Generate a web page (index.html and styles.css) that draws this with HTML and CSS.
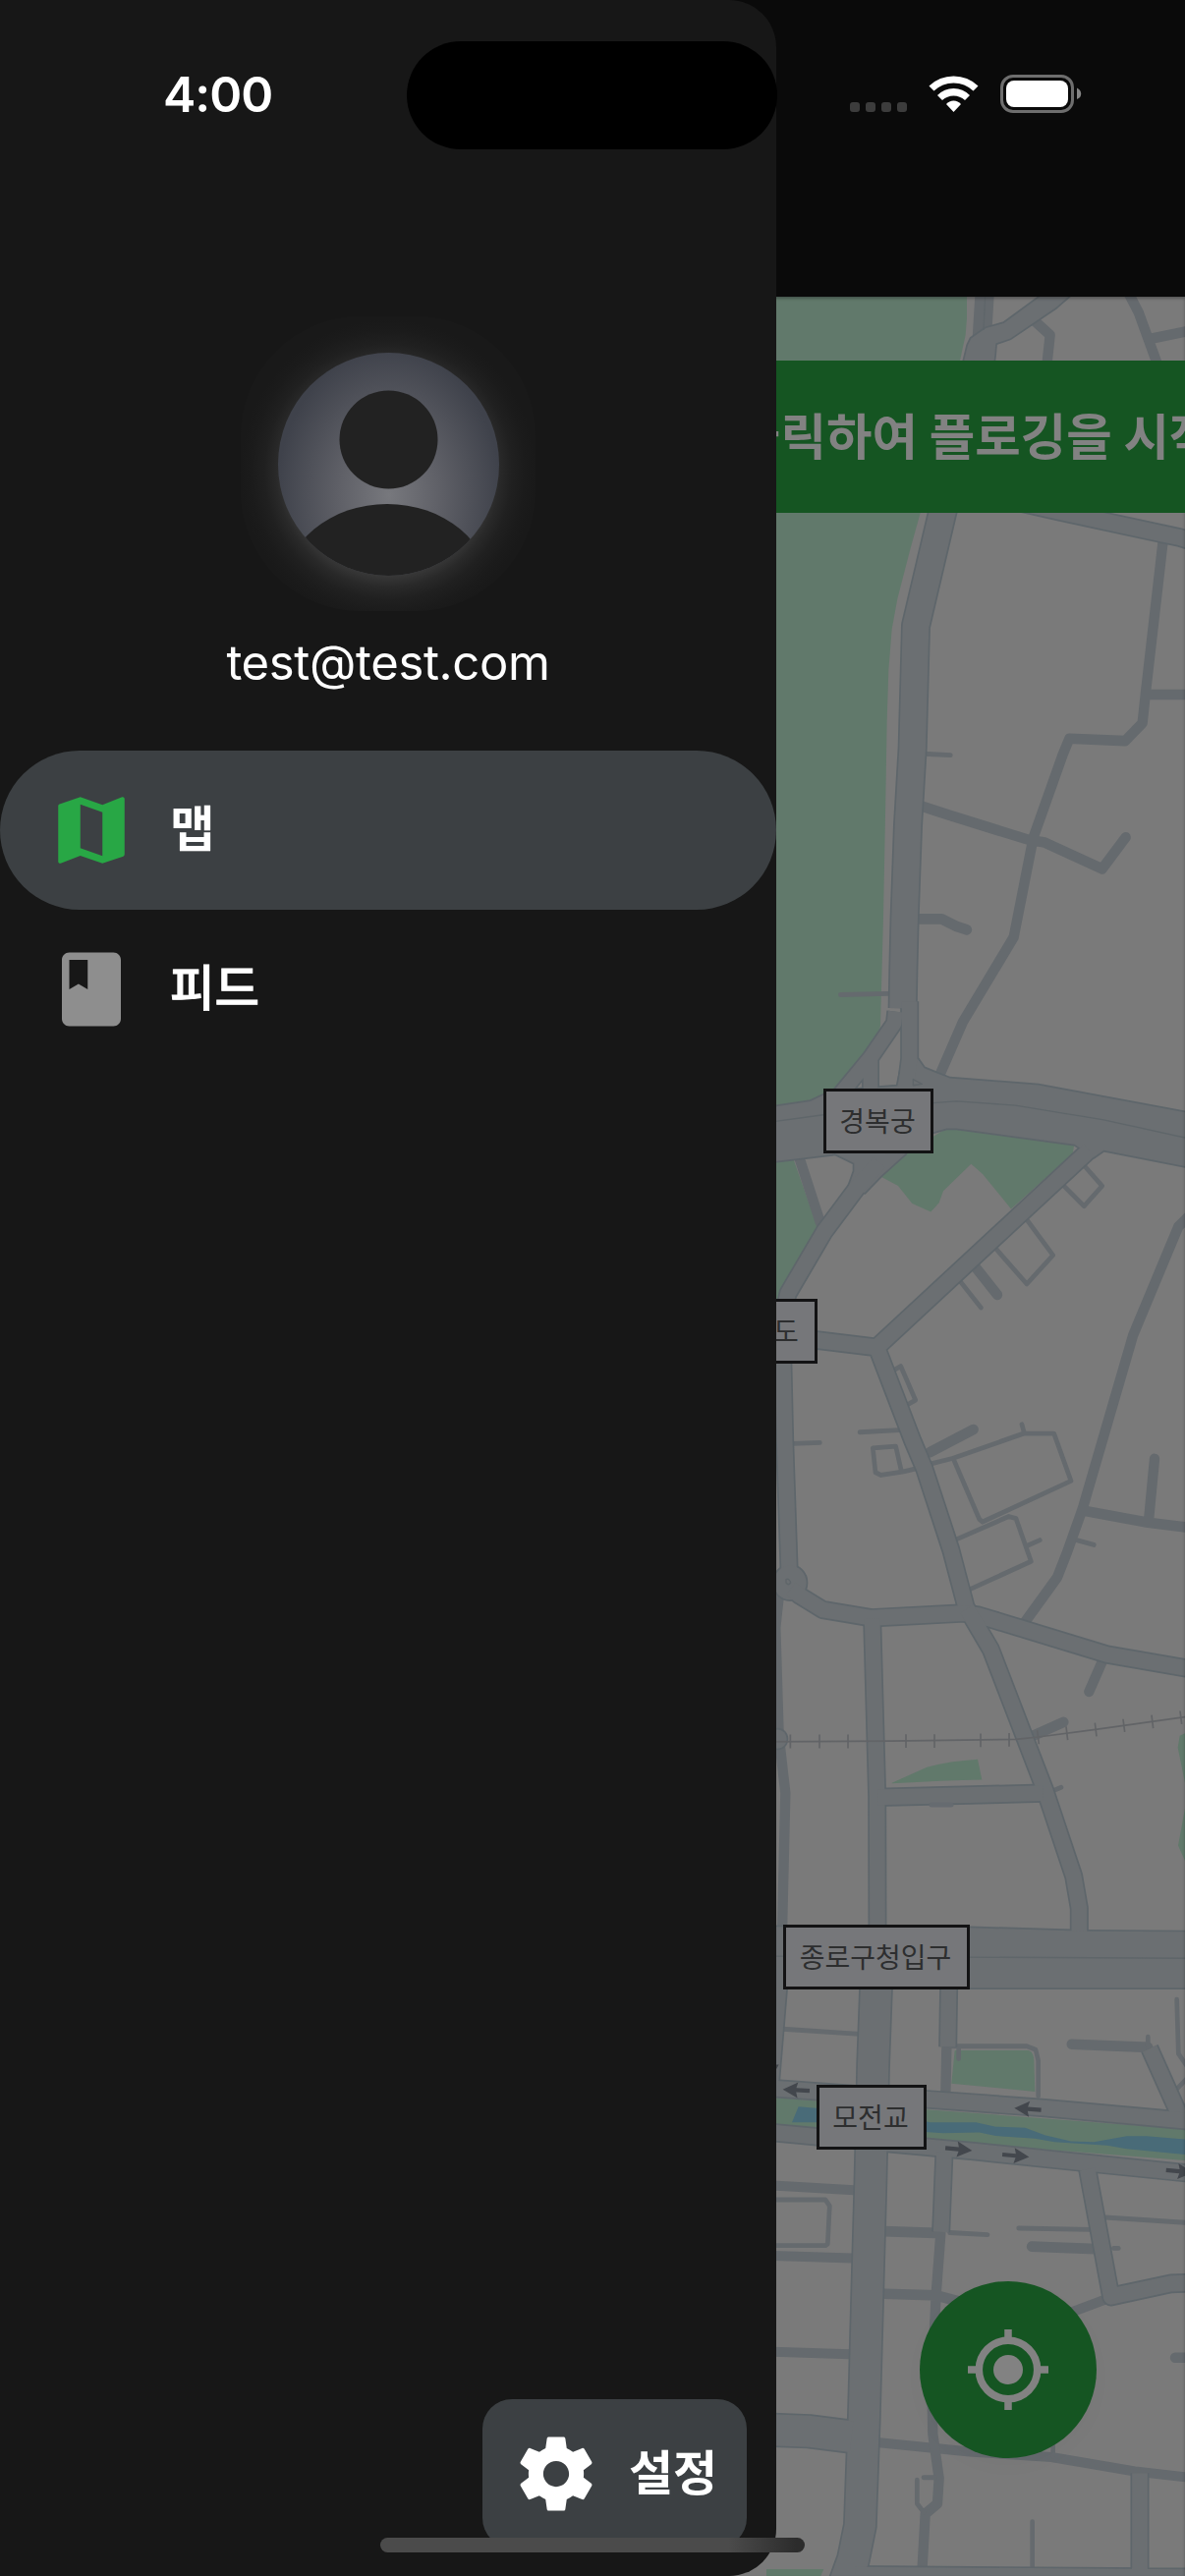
FILE: index.html
```
<!DOCTYPE html>
<html lang="ko">
<head>
<meta charset="utf-8">
<title>플로깅</title>
<link rel="stylesheet" href="styles.css">
</head>
<body>
<div class="screen">
  <main class="app">
    <header class="app-header"></header>
    <section class="map">
      <svg class="map-canvas" viewBox="0 302 1206 2320" preserveAspectRatio="none">
        <defs>
          <g id="roads">
            <g transform="translate(780 0) scale(.33333 .34439)">
              <path class="poly" d="M845 870L725 955L670 970L625 1000L615 1020L595 1100H690L697 1050L700 1015L745 1000L885 908L930 870Z"/>
            </g>
            <g transform="translate(780 520) scale(.33333 .34439)">
              <path class="w84" d="M652 -440L537 6L456 340L446 700L432 930L422 1200L418 1360L416 1470"/>
              <path class="w50" d="M700 -40L900 3L1200 66L1260 78L1300 90"/>
            </g>
            <g transform="translate(780 1040) scale(.33333 .34439)">
              <path class="poly" d="M0 255L135 235L200 205L400 190L415 120L462 110L482 137L515 150L560 167L830 187L1290 270V429L1030 380L1000 400L940 362L580 315H550L460 340L200 392L0 415Z"/>
              <path class="poly" d="M205 388L268 418V442L250 490L300 505L350 455L425 390Z"/>
              <path class="w46" d="M394 -30L390 5L318 106L225 215M318 115V210"/>
              <path class="w50" d="M437 -60V110L424 210"/>
              <path class="w50" d="M345 415L285 480L177 620L66 803L55 850M60 930L332 962L345 955L985 380M340 970L447 1240L482 1320L563 1560L612 1740M48 900L56 1240L70 1640"/>
            </g>
            <g transform="translate(780 1560) scale(.33333 .34439)">
              <circle cx="72" cy="148" r="50"/>
              <path class="w48" d="M75 165L100 185L172 228L320 252L605 238L650 245L1040 360L1290 402"/>
              <path class="w50" d="M612 225L685 345L850 760L938 1015L955 1110V1200M323 255L338 780L339 1170M557 1340L554 1520M38 1340L12 1640"/>
              <path class="w48" d="M340 782L845 770"/>
              <path class="poly" d="M0 1165L620 1168L980 1178L1290 1180V1345H0Z"/>
              <path class="w50" d="M1170 1525L1265 1730"/>
              <circle cx="34" cy="610" r="28"/>
            </g>
            <g transform="translate(780 2080) scale(.33333 .34566)">
              <path class="w98" d="M336 -200L326 60L318 400L311 640L298 1100L286 1420L265 1520L235 1600"/>
              <path class="w48" d="M20 132L500 165L850 190L1290 228M20 262L370 294L640 318L960 350L1290 382"/>
              <path class="w50" d="M543 320L533 555M980 370L1052 745L1235 707L1290 705M1140 1265V1560M270 1565L1290 1572"/>
              <path class="w92" d="M20 1138L130 1142L260 1158"/>
            </g>
          </g>
          <path id="arrow" d="M0 0L46 -23L41 -6H82V6H41L46 23Z"/>
        </defs>

        <rect class="land" x="0" y="302" width="1206" height="2320"/>

        <g class="park">
          <path transform="translate(780 0) scale(.33333 .34439)" d="M0 870H612V940L608 990L590 1070L470 1516L440 1620L400 1770L383 1860L373 1980L368 2130L364 2360L357 2710L348 3030L340 3080L210 3215L135 3255L0 3270Z"/>
          <g transform="translate(780 1040) scale(.33333 .34439)">
            <path d="M0 412L83 408L155 605L45 795L30 850H0Z"/>
            <path d="M550 315L940 362L935 390L747 553L660 450L625 420L540 500L527 535L502 562L445 537L402 485L350 458L425 390Z"/>
          </g>
          <g transform="translate(780 1560) scale(.33333 .34439)">
            <path d="M383 740L490 693Q560 675 645 670L658 730Q540 732 383 741Z"/>
            <path d="M1290 588L1262 600L1256 635L1278 740H1290ZM1290 790L1278 815L1257 925L1278 970H1290Z"/>
            <path d="M575 1530H800Q817 1535 817 1560L820 1652L565 1628Z"/>
          </g>
          <g transform="translate(780 2080) scale(.33333 .34566)">
            <path d="M0 158L500 195L1290 253V345L490 284L0 238Z"/>
            <path d="M0 1548H175L165 1570H0Z"/>
          </g>
        </g>
        <path class="water" transform="translate(780 2080) scale(.33333 .34566)" d="M78 232L98 186L150 190L400 210L500 232H640L700 245L790 248L850 270L930 288L1000 290L1100 273H1160L1290 283V328L1100 310L1040 300L880 290L820 280L700 272L650 262L540 264L400 255L155 232Z"/>

        <g class="lane">
          <g transform="translate(780 0) scale(.33333 .34439)">
            <path class="w58" d="M668 840L658 1000"/>
            <path class="w30" d="M815 945L866 990L855 1090M1105 865L1137 925L1165 1000L1195 1080M1170 1002L1290 978"/>
          </g>
          <g transform="translate(780 520) scale(.33333 .34439)">
            <path class="w30" d="M465 870L560 900L800 972L850 980L1025 1058L1097 965M465 1206H535L580 1228L612 1238M1212 80L1157 545L1148 627L1095 680L925 673L905 720L815 965L755 1260L600 1510L528 1670M1165 543H1290"/>
            <path class="w12" d="M480 718L562 722M226 1430L372 1427"/>
          </g>
          <g transform="translate(780 1040) scale(.33333 .34439)">
            <path class="w30" d="M98 395L165 595M638 725L705 807M500 1272L632 1205M1290 575L1258 605L1120 925L965 1440L918 1568L888 1642L785 1780M970 1445L1165 1480L1290 1495M1185 1292L1167 1475"/>
            <path class="w12" d="M970 425L1025 485L970 545L908 485M795 585L875 690L795 775L700 670M590 765L655 845M392 1028L410 1018L455 1118L430 1132M285 1213L405 1207M80 1247L163 1244M500 1307L570 1290L785 1217H878L930 1357L660 1478L650 1470L570 1290M780 1190L787 1215M575 1532L740 1462L762 1468L808 1595L620 1678M800 1547L835 1532M460 1320L415 1330L350 1340L333 1332L325 1260L395 1255L412 1328M950 1533L1000 1546"/>
          </g>
          <g transform="translate(780 1560) scale(.33333 .34439)">
            <path class="w30" d="M38 190L28 280L38 600L58 770L48 1180M985 470L1028 375M815 600L907 560M932 1512L1165 1521M550 1525L547 1660"/>
            <path class="w12" d="M875 763L900 753M50 1467L285 1482M560 1518H795L822 1528L830 1560V1665M587 1520V1555M1253 1380L1258 1540L1290 1585M1165 1490V1520"/>
          </g>
          <g transform="translate(780 2080) scale(.33333 .34566)">
            <path class="w28" d="M20 418L268 432M20 625L262 632M20 908L255 915M345 1175L620 1202L870 1218L1125 1260L1290 1278M935 790L1045 750"/>
            <path class="w30" d="M360 553L515 558M532 560L518 740L505 1000L508 1150L527 1280L522 1355L485 1385L475 1560M360 737L520 742L590 760M810 598L1005 605M1248 925H1290"/>
            <path class="w12" d="M20 460H180L193 478L187 590L180 595H20M560 557L675 563M460 1285V1355L480 1380M480 1278H515M812 1408V1550M770 544L990 548M1060 603H1075M1035 512L1290 528M1255 132L1285 102M875 1180V1215"/>
          </g>
        </g>

        <use href="#roads" class="road-edge"/>
        <use href="#roads" class="road-fill"/>
        <path class="road-bump" d="M948 1837H968"/>

        <g class="centerline">
          <path transform="translate(780 1040) scale(.33333 .34439)" d="M0 298L174 275L510 240L580 235L760 247L1030 290L1290 345M448 170L475 184L448 188Z"/>
          <path transform="translate(780 1560) scale(.33333 .34439)" d="M0 1252L1290 1258M60 138Q70 134 74 148Q68 158 60 148Z"/>
          <path transform="translate(780 0) scale(.33333 .34439)" d="M668 878L663 975"/>
        </g>
        <g class="rail" transform="translate(780 1560) scale(.33333 .34439)">
          <path d="M0 618L380 616L760 611L830 604L1005 582L1290 543"/>
          <path d="M73 597V637M162 597V637M249 597V637M426 596V636M513 596V636M654 594V634M741 592V632M827 585L832 625M915 573L920 613M1003 562L1008 602M1089 551L1094 589M1176 539L1181 578M1263 527L1268 566"/>
        </g>
        <g class="oneway" transform="translate(780 2080) scale(.33333 .34566)">
          <use href="#arrow" transform="translate(50 135) rotate(3)"/>
          <use href="#arrow" transform="translate(757 190) rotate(4)"/>
          <use href="#arrow" transform="translate(628 315) rotate(185)"/>
          <use href="#arrow" transform="translate(802 334) rotate(185)"/>
          <use href="#arrow" transform="translate(1302 380) rotate(185)"/>
          <path d="M24 62H38L30 76Z"/>
        </g>
      </svg>
      <div class="banner"><p class="banner-text">클릭하여 플로깅을 시작하세요</p></div>
      <span class="pin pin-palace">경복궁</span>
      <span class="pin pin-road">도</span>
      <span class="pin pin-office">종로구청입구</span>
      <span class="pin pin-bridge">모전교</span>
      <button class="locate" aria-label="내 위치">
        <svg viewBox="0 0 82 82" width="82" height="82">
          <circle class="ring" cx="41" cy="41" r="29.7"/>
          <circle class="dot" cx="41" cy="41" r="15"/>
          <path class="tick" d="M41 0V9M41 73V82M0 41H9M73 41H82"/>
        </svg>
      </button>
    </section>
  </main>

  <aside class="drawer">
    <div class="profile">
      <div class="avatar-glow">
        <svg class="avatar" viewBox="0 0 225 227">
          <defs>
            <radialGradient id="disc" gradientUnits="userSpaceOnUse" cx="113" cy="145" r="150" gradientTransform="translate(113 0) scale(.76 1) translate(-113 0)">
              <stop offset="0" stop-color="#77787d"/>
              <stop offset=".45" stop-color="#5f6067"/>
              <stop offset="1" stop-color="#3f424b"/>
            </radialGradient>
            <clipPath id="disc-clip"><ellipse cx="112.5" cy="113.5" rx="112.5" ry="113.5"/></clipPath>
          </defs>
          <g clip-path="url(#disc-clip)">
            <rect width="225" height="227" fill="url(#disc)"/>
            <ellipse cx="111" cy="241" rx="105" ry="87" fill="#222"/>
          </g>
          <circle cx="112.5" cy="88.5" r="50" fill="#222"/>
        </svg>
      </div>
      <p class="email">test@test.com</p>
    </div>
    <nav class="menu">
      <a class="menu-item menu-item-active">
        <svg class="icon icon-green" viewBox="0 0 24 24"><path d="M20.5 3l-.16.03L15 5.1 9 3 3.36 4.9c-.21.07-.36.25-.36.48V20.5c0 .28.22.5.5.5l.16-.03L9 18.9l6 2.1 5.64-1.9c.21-.07.36-.25.36-.48V3.5c0-.28-.22-.5-.5-.5zM15 19l-6-2.11V5l6 2.11V19z"/></svg>
        <span>맵</span>
      </a>
      <a class="menu-item">
        <svg class="icon icon-gray" viewBox="0 0 24 24"><path d="M18 2H6c-1.1 0-2 .9-2 2v16c0 1.1.9 2 2 2h12c1.1 0 2-.9 2-2V4c0-1.1-.9-2-2-2zM6 4h5v8l-2.5-1.5L6 12V4z"/></svg>
        <span>피드</span>
      </a>
    </nav>
    <button class="settings">
      <svg class="icon icon-white" viewBox="0 0 24 24"><path d="M19.43 12.98c.04-.32.07-.64.07-.98s-.03-.66-.07-.98l2.11-1.65c.19-.15.24-.42.12-.64l-2-3.46c-.12-.22-.39-.3-.61-.22l-2.49 1c-.52-.4-1.08-.73-1.69-.98l-.38-2.65C14.46 2.18 14.25 2 14 2h-4c-.25 0-.46.18-.49.42l-.38 2.65c-.61.25-1.17.59-1.69.98l-2.49-1c-.23-.09-.49 0-.61.22l-2 3.46c-.13.22-.07.49.12.64l2.11 1.65c-.04.32-.07.65-.07.98s.03.66.07.98l-2.11 1.65c-.19.15-.24.42-.12.64l2 3.46c.12.22.39.3.61.22l2.49-1c.52.4 1.08.73 1.69.98l.38 2.65c.03.24.24.42.49.42h4c.25 0 .46-.18.49-.42l.38-2.65c.61-.25 1.17-.59 1.69-.98l2.49 1c.23.09.49 0 .61-.22l2-3.46c.12-.22.07-.49-.12-.64l-2.11-1.65zM12 15.5c-1.93 0-3.5-1.57-3.5-3.5s1.57-3.5 3.5-3.5 3.5 1.57 3.5 3.5-1.57 3.5-3.5 3.5z"/></svg>
      <span>설정</span>
    </button>
  </aside>

  <div class="status-bar">
    <span class="clock">4:00</span>
    <span class="island"></span>
    <div class="indicators">
      <span class="signal"><i></i><i></i><i></i><i></i></span>
      <svg class="wifi" viewBox="0 0 51 38" width="51" height="38">
        <path d="M0.5 10.5Q11 0.5 25.5 0.5T50.5 10.5L45.5 15.6Q37 7.5 25.5 7.5T5.5 15.6Z"/>
        <path d="M9 20Q16 13 25.5 13T42 20L37 25Q32 20.500 25.5 20.500T14 25Z"/>
        <path d="M18 29Q21 25.5 25.5 25.5T33 29L25.5 37Z"/>
      </svg>
      <svg class="battery" viewBox="0 0 83 39" width="83" height="39">
        <rect class="shell" x="1.5" y="1.5" width="72" height="36" rx="11.5"/>
        <rect class="charge" x="6" y="6" width="63" height="27" rx="8"/>
        <path class="nub" d="M78 13.5Q82.2 15.5 82.2 19.5T78 25Z"/>
      </svg>
    </div>
  </div>
  <div class="home-indicator"></div>
</div>
</body>
</html>
```
FILE: styles.css
```
* {
  box-sizing: border-box;
}

body {
  margin: 0;
  background: #0a0a0a;
  font-family: Inter, "Noto Sans CJK KR", sans-serif;
  color: #fff;
}

p {
  margin: 0;
}

button {
  border: 0;
  padding: 0;
  font: inherit;
  color: inherit;
}

.screen {
  position: relative;
  width: 1206px;
  height: 2622px;
  overflow: hidden;
}

.app {
  display: flex;
  flex-direction: column;
  height: 100%;
}

.app-header {
  height: 302px;
  background: #0a0a0a;
}

/* Map */
.map {
  position: relative;
  flex: 1;
  padding-top: 65px;
  overflow: hidden;
  box-shadow: inset 0 2px 3px rgba(0, 0, 0, .3);
}

.map-canvas {
  position: absolute;
  inset: 0;
  width: 100%;
  height: 100%;
  z-index: -1;
}

.map-canvas path,
.map-canvas circle {
  stroke-linejoin: round;
}

.land { fill: #7a7a7a; }
.park { fill: #61796b; }
.water { fill: #496b78; }

.w12 { --w: 14px; }
.w28 { --w: 29px; }
.w30 { --w: 31px; }
.w46 { --w: 44px; }
.w48 { --w: 46px; }
.w50 { --w: 47px; }
.w58 { --w: 58px; }
.w84 { --w: 80px; }
.w92 { --w: 92px; }
.w98 { --w: 94px; }
.poly { --w: 0px; }

.lane {
  fill: none;
  stroke: #656a6e;
  stroke-linecap: round;
}

.lane path {
  stroke-width: var(--w);
}

.road-edge {
  --edge: 10px;
  fill: #5e666b;
  stroke: #5e666b;
}

.road-fill {
  --edge: 0px;
  fill: #6b6f72;
  stroke: #6b6f72;
}

#roads path {
  stroke-width: calc(var(--w) + var(--edge));
}

#roads path:not(.poly) {
  fill: none;
}

#roads circle {
  stroke-width: var(--edge);
}

.road-bump {
  fill: none;
  stroke: #666b70;
  stroke-width: 5;
  stroke-linecap: round;
}

.centerline,
.rail {
  fill: none;
  stroke: #5f666a;
  stroke-width: 4;
}

.rail {
  stroke: #626467;
  stroke-width: 5;
}

.oneway { fill: #43474d; }

.banner {
  height: 155px;
  display: flex;
  align-items: center;
  padding: 2px 0 0 748px;
  background: #155522;
  overflow: hidden;
}

.banner-text {
  font-size: 50.5px;
  font-weight: 700;
  line-height: 1;
  white-space: nowrap;
  color: #828282;
}

.pin {
  position: absolute;
  height: 66px;
  display: flex;
  align-items: center;
  justify-content: center;
  padding: 1px 2px 0 0;
  border: 3px solid #131314;
  background: #76777a;
  font-size: 28px;
  line-height: 1;
  color: #2d2e2f;
}

.pin-palace { left: 838px; top: 806px; width: 112px; }
.pin-road { left: 770px; top: 1020px; width: 62px; }
.pin-office { left: 797px; top: 1657px; width: 190px; }
.pin-bridge { left: 831px; top: 1820px; width: 112px; }

.locate {
  position: absolute;
  left: 936px;
  top: 2020px;
  width: 180px;
  height: 180px;
  display: flex;
  align-items: center;
  justify-content: center;
  border-radius: 50%;
  background: #155522;
  box-shadow: 0 8px 20px rgba(0, 0, 0, .025);
}

.ring, .tick {
  fill: none;
  stroke: #828282;
  stroke-width: 7.5;
}

.dot { fill: #828282; }

/* Drawer */
.drawer {
  position: absolute;
  left: 0;
  top: 0;
  width: 790px;
  height: 100%;
  padding-top: 322px;
  display: flex;
  flex-direction: column;
  border-radius: 0 48px 48px 0;
  background: #171717;
}

.profile {
  display: flex;
  flex-direction: column;
  align-items: center;
  height: 442px;
}

.avatar-glow {
  width: 300px;
  height: 300px;
  display: flex;
  align-items: center;
  justify-content: center;
  border-radius: 122px;
  background: radial-gradient(ellipse 150px 155px at 50% 52.7%, #3c3c3c 66%, #292929 76%, #202020 84%, #1b1b1b 93%, #191919 100%);
}

.avatar {
  width: 225px;
  height: 227px;
}

.email {
  margin-top: 23px;
  font-size: 49px;
  letter-spacing: -.35px;
  line-height: 60px;
}

.menu {
  display: flex;
  flex-direction: column;
}

.menu-item {
  height: 162px;
  display: flex;
  align-items: center;
  gap: 35px;
  padding-left: 48px;
  border-radius: 81px;
  font-size: 49.5px;
  font-weight: 500;
  -webkit-text-stroke: .9px currentColor;
}

.menu-item span,
.settings span {
  line-height: 1;
}

.menu-item-active {
  background: #3c4043;
  font-weight: 700;
  -webkit-text-stroke: 0;
}

.icon {
  width: 90px;
  height: 90px;
  flex: none;
}

.icon-green { fill: #28a745; }
.icon-gray { fill: #8e8e8e; }
.icon-white { fill: #fff; }

.settings {
  align-self: flex-end;
  width: 269px;
  height: 151px;
  margin: auto 30px 29px 0;
  padding-left: 30px;
  display: flex;
  align-items: center;
  gap: 29px;
  border-radius: 30px;
  background: #3c4043;
  font-size: 49px;
  font-weight: 700;
}

/* System chrome */
.status-bar {
  position: absolute;
  left: 0;
  top: 0;
  width: 100%;
  height: 194px;
  padding: 0 105px 0 166px;
  display: flex;
  align-items: center;
}

.clock {
  width: 248px;
  margin-top: -3px;
  font-size: 50px;
  font-weight: 600;
  letter-spacing: -1px;
  line-height: 1;
}

.island {
  width: 377px;
  height: 110px;
  border-radius: 55px;
  background: #000;
}

.indicators {
  margin: -3px 0 0 auto;
  display: flex;
  align-items: flex-end;
  gap: 22px;
}

.signal {
  display: flex;
  gap: 6px;
  height: 11px;
}

.signal i {
  width: 10px;
  height: 10px;
  border-radius: 3px;
  background: #3c3c3c;
}

.wifi { fill: #fff; }
.shell { fill: none; stroke: #6e6e6e; stroke-width: 3; }
.charge { fill: #fff; }
.nub { fill: #858585; }

.home-indicator {
  position: absolute;
  left: 387px;
  bottom: 24px;
  width: 432px;
  height: 15px;
  border-radius: 8px;
  background: linear-gradient(90deg, #4b4b4b 82%, #2c2c2c 98%);
}
```
